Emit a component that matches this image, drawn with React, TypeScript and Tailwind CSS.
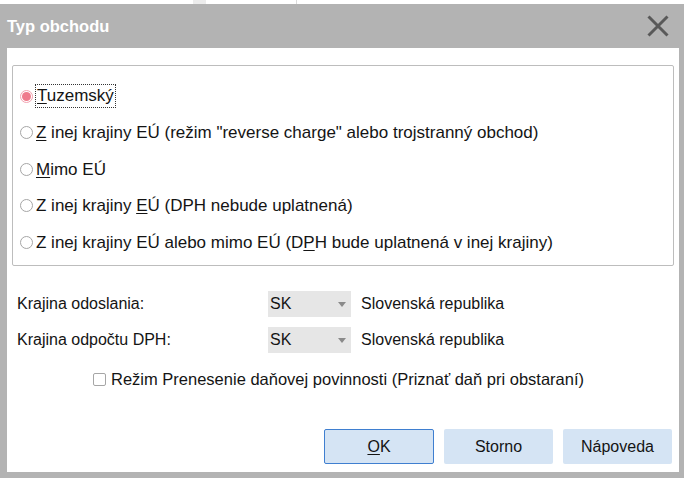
import React from 'react'

const font = { fontFamily: '"Liberation Sans", Arial, sans-serif' }

function Radio({ checked }: { checked?: boolean }) {
  return (
    <span
      className={
        'flex h-[13px] w-[13px] shrink-0 items-center justify-center rounded-full border ' +
        (checked ? 'border-[#f3a3b1] bg-white' : 'border-[#a6a6a6] bg-white')
      }
    >
      {checked && <span className="h-[9px] w-[9px] rounded-full bg-[#ef7b8d]" />}
    </span>
  )
}

function Option({
  checked,
  children,
}: {
  checked?: boolean
  children: React.ReactNode
}) {
  return (
    <div className="flex h-[36.5px] items-center gap-[2px] pl-[7px] text-[17px]">
      <Radio checked={checked} />
      {checked ? (
        <span className="border border-dotted border-[#333] px-[1px] leading-[22px]">
          {children}
        </span>
      ) : (
        <span className="pl-[1px]">{children}</span>
      )}
    </div>
  )
}

function Select() {
  return (
    <div className="flex h-[26px] w-[83px] items-center justify-between bg-[#e6e6e6] pl-[2px] pr-[5px]">
      <span>SK</span>
      <svg width="8" height="5" viewBox="0 0 8 5">
        <path d="M0 0h8L4 5z" fill="#8a8a8a" />
      </svg>
    </div>
  )
}

export default function App() {
  return (
    <div
      className="flex h-[478px] w-[684px] flex-col bg-white text-[16px] text-[#141414]"
      style={font}
    >
      {/* strip of whatever sits behind the dialog */}
      <div className="flex h-[4px] shrink-0">
        <div className="ml-[193px] w-[13px] bg-[#ececec]" />
        <div className="ml-[90px] w-px bg-[#dcdcdc]" />
      </div>

      <div className="flex flex-1 flex-col bg-[#b3b3b3] pb-[6px] pl-[7px] pr-[5px]">
        <div className="flex h-[44px] shrink-0 items-center justify-between">
          <span className="text-[16.5px] font-bold text-white">Typ obchodu</span>
          <svg width="22" height="22" viewBox="0 0 22 22" className="mr-[10px]">
            <path
              d="M1.5 1.5l19 19M20.5 1.5l-19 19"
              stroke="#595959"
              strokeWidth="3"
            />
          </svg>
        </div>

        <div className="flex flex-1 flex-col bg-white px-[5px] pt-[17px]">
          <div className="h-[201px] rounded-[2px] border border-[#bdbdbd] pt-[12px]">
            <Option checked>
              <span className="underline underline-offset-2">T</span>uzemský
            </Option>
            <Option>
              <span className="underline underline-offset-2">Z</span> inej krajiny EÚ
              (režim "reverse charge" alebo trojstranný obchod)
            </Option>
            <Option>
              <span className="underline underline-offset-2">M</span>imo EÚ
            </Option>
            <Option>
              Z inej krajiny <span className="underline underline-offset-2">E</span>Ú
              (DPH nebude uplatnená)
            </Option>
            <Option>
              Z inej krajiny EÚ alebo mimo EÚ (D
              <span className="underline underline-offset-2">P</span>H bude uplatnená v
              inej krajiny)
            </Option>
          </div>

          <div className="mt-[25px] flex flex-col gap-[10px] pl-[5px]">
            <div className="flex items-center">
              <span className="w-[251px]">Krajina odoslania:</span>
              <Select />
              <span className="ml-[10px]">Slovenská republika</span>
            </div>
            <div className="flex items-center">
              <span className="w-[251px]">Krajina odpočtu DPH:</span>
              <Select />
              <span className="ml-[10px]">Slovenská republika</span>
            </div>
          </div>

          <div className="mt-[14px] flex items-center gap-[5px] pl-[81px] text-[16.5px]">
            <span className="h-[13px] w-[13px] rounded-[2px] border border-[#a6a6a6]" />
            <span>Režim Prenesenie daňovej povinnosti (Priznať daň pri obstaraní)</span>
          </div>

          <div className="mt-auto mb-[8px] flex justify-end gap-[10px] pr-[2px]">
            <button className="h-[35px] w-[110px] rounded-[2px] border border-[#3f7fd0] bg-[#d5e4f4]">
              <span className="underline underline-offset-2">O</span>K
            </button>
            <button className="h-[35px] w-[109px] rounded-[2px] bg-[#d5e4f4]">
              Storno
            </button>
            <button className="h-[35px] w-[109px] rounded-[2px] bg-[#d5e4f4]">
              Nápoveda
            </button>
          </div>
        </div>
      </div>
    </div>
  )
}
